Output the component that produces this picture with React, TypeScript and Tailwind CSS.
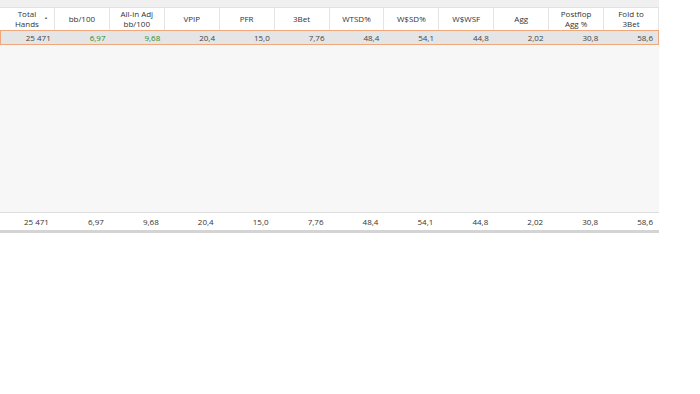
import React from "react";

const headers: string[][] = [
  ["Total", "Hands"],
  ["bb/100"],
  ["All-in Adj", "bb/100"],
  ["VPIP"],
  ["PFR"],
  ["3Bet"],
  ["WTSD%"],
  ["W$SD%"],
  ["W$WSF"],
  ["Agg"],
  ["Postflop", "Agg %"],
  ["Fold to", "3Bet"],
];

const values = ["25 471", "6,97", "9,68", "20,4", "15,0", "7,76", "48,4", "54,1", "44,8", "2,02", "30,8", "58,6"];

const App: React.FC = () => {
  return (
    <div className="w-[700px] h-[394px] bg-white" style={{ fontFamily: "'Open Sans', 'Noto Sans', sans-serif" }}>
      <div className="w-[659px] flex flex-col">
        <div className="h-[8px] bg-[#f0f0f0] border-b border-[#e2e2e2]"></div>
        <div className="grid grid-cols-12 h-[22px] bg-white">
          {headers.map((h, i) => (
            <div key={i} className="relative flex flex-col justify-center items-center border-r border-[#e4e4e4] text-[8px] leading-[10px] text-[#333]">
              {h.map((l) => (
                <span key={l}>{l}</span>
              ))}
              {i === 0 && <span className="absolute right-[6px] top-[8px] text-[4px] leading-[4px] text-[#666]">▲</span>}
            </div>
          ))}
        </div>
        <div className="grid grid-cols-12 h-[15px] bg-[#e5e5e5] border border-[#f0a77c] text-[8px] text-[#444]">
          {values.map((v, i) => (
            <div key={i} className={`flex items-center justify-end pr-[5px] ${i === 1 || i === 2 ? "text-[#2e8b1e]" : ""}`}>
              {v}
            </div>
          ))}
        </div>
        <div className="h-[167px] bg-[#f7f7f7]"></div>
        <div className="grid grid-cols-12 h-[18px] bg-white border-t border-[#dcdcdc] text-[8px] text-[#333]">
          {values.map((v, i) => (
            <div key={i} className="flex items-center justify-end pr-[6px]">
              {v}
            </div>
          ))}
        </div>
        <div className="h-[3px] bg-[#d4d4d4]"></div>
      </div>
    </div>
  );
};

export default App;
